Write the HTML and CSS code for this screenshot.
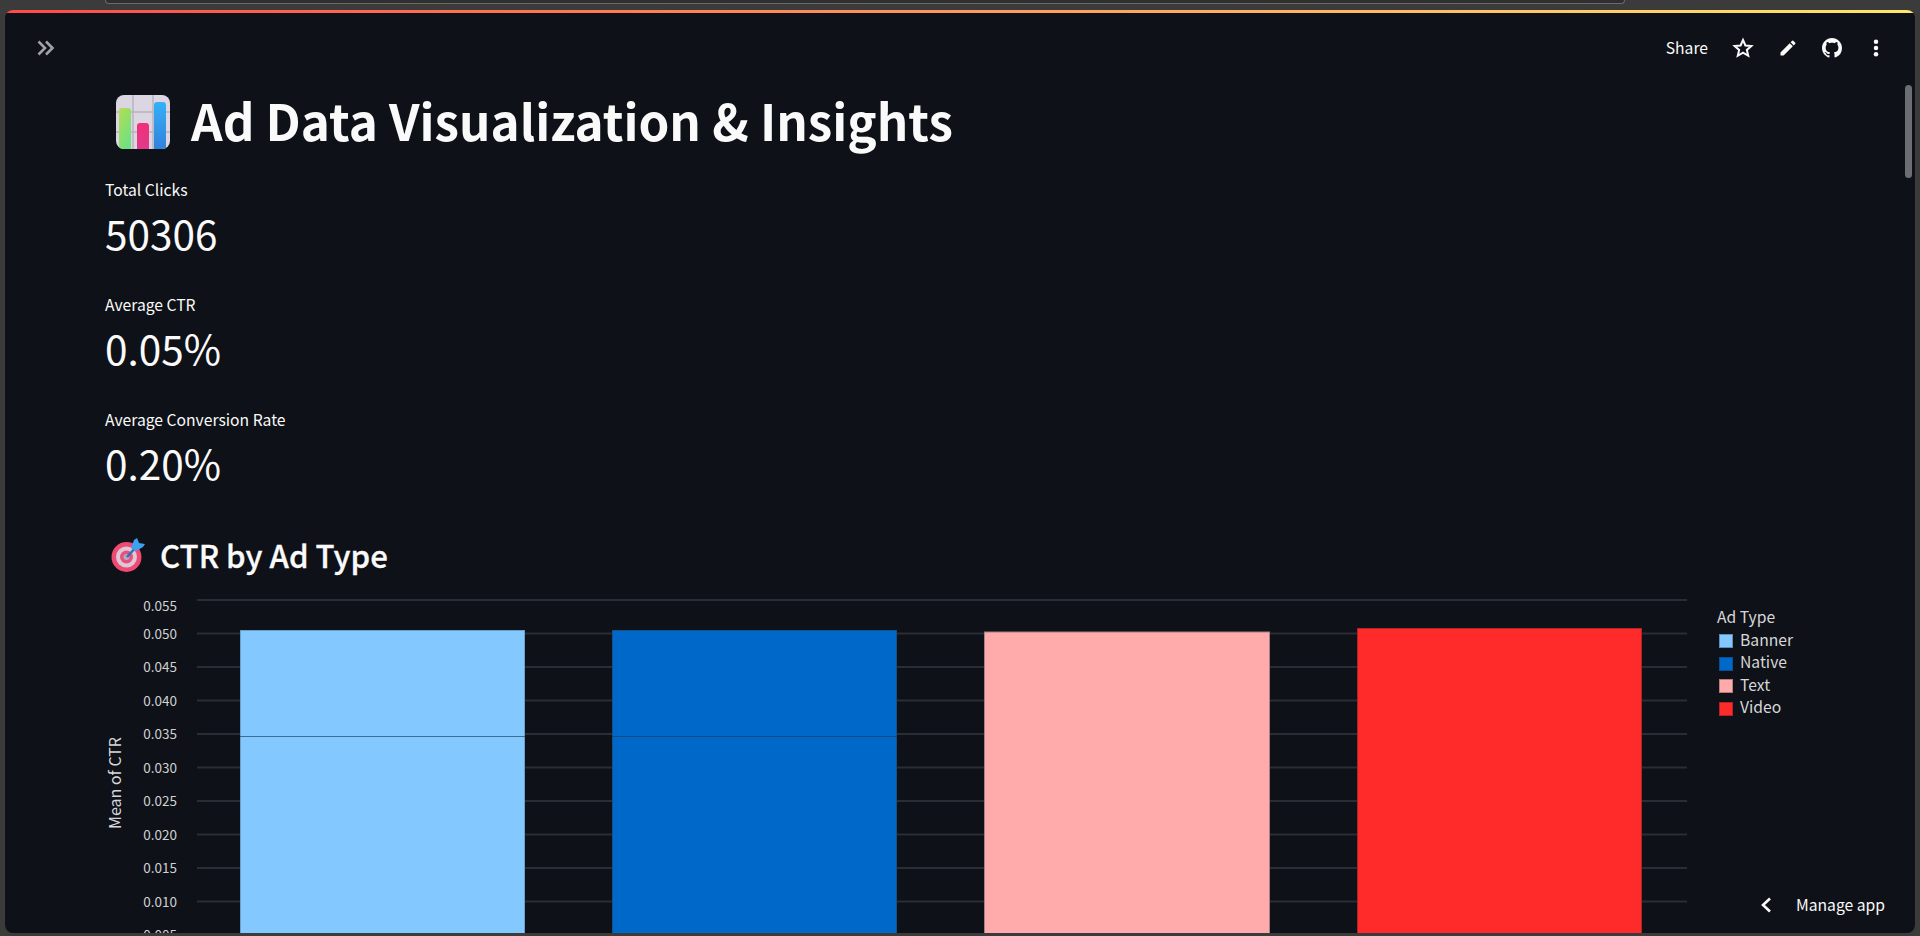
FILE: index.html

```html
<!DOCTYPE html>
<html lang="en">
<head>
	<meta charset="utf-8">
	<title>Ad Data Visualization &amp; Insights</title>
	<link rel="stylesheet" href="styles.css">
</head>
<body>

	<div class="browser-top"><div class="url-bar"></div></div>

	<div class="app">
		<div class="rainbow"></div>

		<header class="toolbar">
			<svg class="expand" viewBox="0 0 20 16"><path d="M2.500 1.500L9 8l-6.500 6.500M10 1.500L16.500 8 10 14.500"/></svg>
			<div class="actions">
				<span class="share">Share</span>
				<svg class="icon star" viewBox="0 0 24 24"><path d="M12 3.200l2.600 6 6.500.6-4.900 4.300 1.500 6.400-5.700-3.400-5.700 3.400 1.500-6.400-4.900-4.300 6.500-.6z"/></svg>
				<svg class="icon" viewBox="0 0 24 24"><path d="M3 17.250V21h3.750L17.810 9.940l-3.750-3.750L3 17.250zM20.710 7.040a1 1 0 000-1.410l-2.340-2.340a1 1 0 00-1.410 0l-1.830 1.830 3.750 3.750 1.830-1.830z"/></svg>
				<svg class="icon" viewBox="0 0 16 16"><path d="M8 0C3.580 0 0 3.580 0 8c0 3.540 2.290 6.530 5.470 7.590.4.07.55-.17.55-.38 0-.19-.01-.82-.01-1.490-2.010.37-2.530-.49-2.690-.94-.09-.23-.48-.94-.82-1.130-.28-.15-.68-.52-.01-.53.63-.01 1.080.58 1.230.82.72 1.210 1.870.87 2.330.66.07-.52.28-.87.51-1.070-1.780-.2-3.640-.89-3.640-3.950 0-.87.31-1.590.82-2.150-.08-.2-.36-1.020.08-2.120 0 0 .67-.21 2.200.82.64-.18 1.320-.27 2-.27s1.360.09 2 .27c1.530-1.040 2.200-.82 2.200-.82.44 1.100.16 1.920.08 2.120.51.56.82 1.270.82 2.150 0 3.070-1.870 3.750-3.650 3.950.29.25.54.73.54 1.480 0 1.070-.01 1.930-.01 2.200 0 .21.15.46.55.38A8.010 8.010 0 0016 8c0-4.420-3.580-8-8-8z"/></svg>
				<svg class="icon" viewBox="0 0 24 24"><circle cx="12" cy="4.500" r="2.700"/><circle cx="12" cy="12" r="2.700"/><circle cx="12" cy="19.500" r="2.700"/></svg>
			</div>
		</header>

		<div class="scrollbar"></div>

		<main class="content">
			<h1 class="title">
				<svg class="title-emoji" viewBox="0 0 54 54">
					<defs>
						<linearGradient id="green" x1="0" y1="0" x2="0.6" y2="1"><stop offset="0" stop-color="#b6dd50"/><stop offset="1" stop-color="#6fe184"/></linearGradient>
						<linearGradient id="pink" x1="0" y1="0" x2="0" y2="1"><stop offset="0" stop-color="#f0307a"/><stop offset="1" stop-color="#e13a8a"/></linearGradient>
						<linearGradient id="blue" x1="0" y1="0" x2="0" y2="1"><stop offset="0" stop-color="#36b0f7"/><stop offset="1" stop-color="#3282dc"/></linearGradient>
						<clipPath id="tile"><rect width="54" height="54" rx="8"/></clipPath>
					</defs>
					<g clip-path="url(#tile)">
						<rect width="54" height="54" fill="#dbd6e2"/>
						<path d="M17 0v54M37 0v54M0 17h54M0 37h54" stroke="#b8b3bd" stroke-width="1.500"/>
						<path d="M3 54V16a3 3 0 013-3h6a3 3 0 013 3v38z" fill="url(#green)"/>
						<path d="M21 54V31a3 3 0 013-3h6a3 3 0 013 3v23z" fill="url(#pink)"/>
						<path d="M38 54V10a3 3 0 013-3h6a3 3 0 013 3v44z" fill="url(#blue)"/>
					</g>
				</svg>
				<span class="title-text">Ad Data Visualization &amp; Insights</span>
			</h1>

			<section class="metric">
				<div class="metric-label">Total Clicks</div>
				<div class="metric-value">50306</div>
			</section>
			<section class="metric">
				<div class="metric-label">Average CTR</div>
				<div class="metric-value">0.05%</div>
			</section>
			<section class="metric">
				<div class="metric-label">Average Conversion Rate</div>
				<div class="metric-value">0.20%</div>
			</section>

			<h2 class="subtitle">
				<svg class="subtitle-emoji" viewBox="0 0 36 36">
					<circle cx="16.500" cy="20" r="15" fill="#ee4a72"/>
					<circle cx="16.500" cy="20" r="10.500" fill="#dcc8d6"/>
					<circle cx="16.500" cy="20" r="6.500" fill="#e8517c"/>
					<circle cx="16.500" cy="20" r="3" fill="#b9a9bb"/>
					<path d="M17 20L27 9" stroke="#2f6fb8" stroke-width="2.500"/>
					<path d="M21 11L24 3l3-2 2 5 6 1-2 3-7 4z" fill="#3f9ff0"/>
				</svg>
				<span>CTR by Ad Type</span>
			</h2>

			<svg class="chart" viewBox="-10 0 1750 390">
				<g class="grid">
					<path d="M92 14H1582M92 47.500H1582M92 81H1582M92 114.500H1582M92 148H1582M92 181.500H1582M92 215H1582M92 248.500H1582M92 282H1582M92 315.500H1582M92 349H1582"/>
				</g>
				<g class="ticks">
					<text x="72" y="25">0.055</text>
					<text x="72" y="53">0.050</text>
					<text x="72" y="86">0.045</text>
					<text x="72" y="120">0.040</text>
					<text x="72" y="153">0.035</text>
					<text x="72" y="187">0.030</text>
					<text x="72" y="220">0.025</text>
					<text x="72" y="254">0.020</text>
					<text x="72" y="287">0.015</text>
					<text x="72" y="321">0.010</text>
					<text x="72" y="354">0.005</text>
				</g>
				<text class="axis-title" transform="translate(16 197) rotate(-90)">Mean of CTR</text>
				<rect x="135.500" y="44.500" width="284" height="340" fill="#83c9ff" stroke="#6a9fc8"/>
				<rect x="507.500" y="44.500" width="284" height="340" fill="#0068c9" stroke="#15528c"/>
				<rect x="879.500" y="46" width="285" height="340" fill="#ffabab" stroke="#a87f84"/>
				<rect x="1252.500" y="42.500" width="284" height="340" fill="#ff2b2b" stroke="#b02428"/>
				<path class="hover-line" d="M135 150.500H420M507 150.500H792"/>
				<text class="legend-title" x="1612" y="37">Ad Type</text>
				<rect class="swatch" x="1614.500" y="48.500" width="13" height="13" fill="#83c9ff" stroke="#5d8fb5"/>
				<rect class="swatch" x="1614.500" y="71.500" width="13" height="13" fill="#0068c9" stroke="#0a4f90"/>
				<rect class="swatch" x="1614.500" y="93.500" width="13" height="13" fill="#ffabab" stroke="#b57c7e"/>
				<rect class="swatch" x="1614.500" y="116.500" width="13" height="13" fill="#ff2b2b" stroke="#b02428"/>
				<g class="legend-labels">
					<text x="1635" y="60">Banner</text>
					<text x="1635" y="82">Native</text>
					<text x="1635" y="105">Text</text>
					<text x="1635" y="127">Video</text>
				</g>
			</svg>
		</main>

		<div class="manage">
			<svg class="chevron" viewBox="0 0 12 16"><path d="M10 1.500L3 8l7 6.500"/></svg>
			<span>Manage app</span>
		</div>
	</div>

</body>
</html>
```

FILE: styles.css

```css
html, body {
	width: 100%;
	height: 100%;
	margin: 0;
	padding: 0;
	overflow: hidden;
}

body {
	background-color: #3b3b3b;
	color: #fafafa;
	font-family: "Noto Sans CJK SC", "Open Sans", sans-serif;
	display: flex;
	flex-direction: column;
}

.browser-top {
	height: 10px;
	flex: none;
	overflow: hidden;
}
.url-bar {
	width: 1518px;
	height: 3px;
	margin-left: 105px;
	background-color: #2f2f2f;
	border: 1px solid #6a6a6a;
	border-top: none;
	border-radius: 0 0 12px 12px;
}

.app {
	position: relative;
	height: 923px;
	margin: 0 5px;
	background-color: #0e1117;
	border-radius: 8px;
	overflow: hidden;
	display: flex;
	flex-direction: column;
}

.rainbow {
	height: 3px;
	flex: none;
	background-image: linear-gradient(90deg, #ff4b4b, #ffe66b 100%);
}

/* top bar */
.toolbar {
	height: 70px;
	flex: none;
	display: flex;
	align-items: center;
	justify-content: space-between;
	padding: 0 29px 0 31px;
}
.expand {
	width: 20px;
	height: 16px;
	fill: none;
	stroke: #a0a2a6;
	stroke-width: 2.600;
}
.actions {
	display: flex;
	align-items: center;
	gap: 24px;
	font-size: 15.700px;
}
.share {
	line-height: 24px;
}
.icon {
	width: 20px;
	height: 20px;
	fill: #fafafa;
}
.icon.star {
	width: 22px;
	height: 22px;
	fill: none;
	stroke: #fafafa;
	stroke-width: 2.200;
}

.scrollbar {
	position: absolute;
	top: 75px;
	right: 3px;
	width: 7px;
	height: 93px;
	background-color: #6d6e71;
	border-radius: 4px;
}

/* page content */
.content {
	padding: 0 0 0 100px;
}
.title {
	display: flex;
	align-items: center;
	gap: 21px;
	margin: 1px 0 0 11px;
	font-size: 49.350px;
	font-weight: 700;
	line-height: 72px;
}
.title-text {
	padding-bottom: 3px;
}
.title-emoji {
	width: 54px;
	height: 54px;
}

.metric {
	margin-bottom: 30px;
}
.metric:first-of-type {
	margin-top: 19px;
}
.metric-label {
	font-size: 15.700px;
	line-height: 24px;
}
.metric-value {
	font-size: 40.500px;
	line-height: 60px;
	margin-top: 1px;
}

.subtitle {
	display: flex;
	align-items: center;
	gap: 14px;
	margin: 39px 0 0 5px;
	font-size: 31.200px;
	font-weight: 500;
	line-height: 46px;
	-webkit-text-stroke: 0.300px #fafafa;
}
.subtitle-emoji {
	width: 36px;
	height: 36px;
}

.chart {
	display: block;
	width: 1750px;
	height: 390px;
	margin: 8px 0 0 -10px;
	font-family: "Noto Sans CJK SC", "Open Sans", sans-serif;
}
.grid path {
	stroke: #2a2d35;
	stroke-width: 2;
	fill: none;
}
.ticks text {
	fill: #d0d1d4;
	font-size: 13.500px;
	text-anchor: end;
}
.axis-title {
	fill: #d6d7da;
	font-size: 16px;
	text-anchor: middle;
}
.hover-line {
	stroke: #1d3a55;
	stroke-opacity: 0.650;
	stroke-width: 1;
	fill: none;
}
.legend-title {
	fill: #d6d7da;
	font-size: 15.700px;
}
.legend-labels text {
	fill: #d6d7da;
	font-size: 15.700px;
}
.swatch {
	stroke-width: 1;
}

.manage {
	position: absolute;
	right: 30px;
	bottom: 16px;
	display: flex;
	align-items: center;
	gap: 24px;
	font-size: 15.700px;
	line-height: 24px;
}
.chevron {
	width: 12px;
	height: 16px;
	fill: none;
	stroke: #fafafa;
	stroke-width: 2.600;
}
```
